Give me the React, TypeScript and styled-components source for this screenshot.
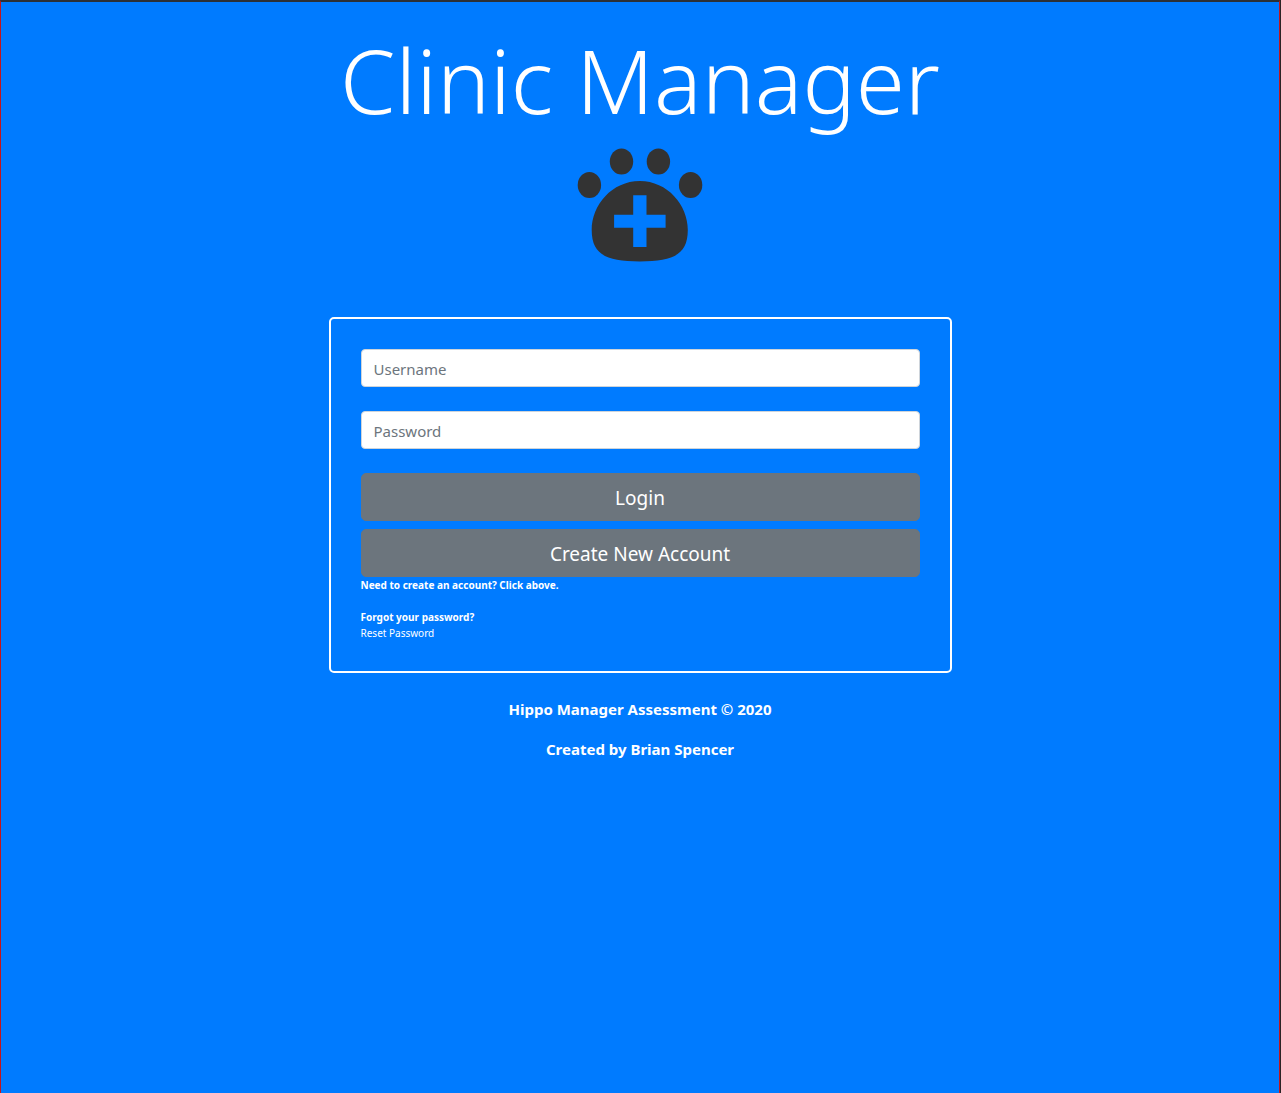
import React from "react";
import styled, { createGlobalStyle } from "styled-components";

const GlobalStyle = createGlobalStyle`
  *, *::before, *::after { box-sizing: border-box; }
  body {
    margin: 0;
    border-right: 1px solid #2b2426;
    background: #007bff;
    color: #fff;
    font-family: "Noto Sans", "Open Sans", sans-serif;
    font-size: 15px;
    line-height: 24px;
  }
`;

const Page = styled.main`
  display: flex;
  flex-direction: column;
  align-items: center;
  min-height: 100vh;
  padding: 20px 0 24px;
  border: 1px solid #c4161c;
  border-top: 2px solid #2b3036;
  border-bottom: 0;
`;

const Title = styled.h1`
  margin: 0 0 3px;
  font-size: 89px;
  font-weight: 300;
  line-height: 116px;
  text-align: center;
`;

const Logo = styled.svg`
  display: block;
  width: 128px;
  height: 128px;
  fill: #333;
`;

const Card = styled.form`
  display: flex;
  flex-direction: column;
  width: calc(50% - 16px);
  margin: 48px 0 24px;
  padding: 30px;
  border: 2px solid #fff;
  border-radius: 5px;
`;

const Field = styled.input`
  width: 100%;
  height: 38px;
  margin: 0 0 24px;
  padding: 8px 12px 6px;
  border: 1px solid #ced4da;
  border-radius: 4px;
  background: #fff;
  color: #495057;
  font: inherit;
  &::placeholder { color: #6c757d; opacity: 1; }
`;

const Actions = styled.div`
  display: grid;
  gap: 8px;
`;

const Button = styled.button`
  height: 48px;
  padding: 9px 16px 7px;
  border: 1px solid #6c757d;
  border-radius: 5px;
  background: #6c757d;
  color: #fff;
  font: inherit;
  font-size: 19px;
  line-height: 30px;
  cursor: pointer;
`;

const Help = styled.p`
  margin: 0 0 16px;
  font-size: 10px;
  line-height: 16px;
  &:last-child { margin-bottom: 0; }
`;

const Strong = styled.strong`
  display: block;
  font-weight: 700;
`;

const ResetLink = styled.a`
  color: #fff;
  text-decoration: none;
`;

const Footer = styled.footer`
  display: grid;
  gap: 16px;
  font-weight: 700;
  text-align: center;
`;

const Credit = styled.p`
  margin: 0;
`;

function PawLogo() {
  return (
    <Logo viewBox="0 0 128 128" role="img" aria-label="Paw with a medical cross">
      <ellipse cx="13.4" cy="44" rx="11.7" ry="13.1" />
      <ellipse cx="45.5" cy="20.5" rx="11.7" ry="13.1" />
      <ellipse cx="82.4" cy="20.5" rx="11.7" ry="13.1" />
      <ellipse cx="114.6" cy="44" rx="11.7" ry="13.1" />
      <path
        fillRule="evenodd"
        d="M63.8 40C36 40 15.7 64 15.7 89C15.7 114 31 120.4 63.8 120.4S111.8 114 111.8 89C111.8 64 91.5 40 63.8 40ZM57.2 54.3H70.5V73.7H89.6V86.7H70.5V106H57.2V86.7H38.1V73.7H57.2Z"
      />
    </Logo>
  );
}

export default function App() {
  return (
    <>
      <GlobalStyle />
      <Page>
        <Title>Clinic Manager</Title>
        <PawLogo />
        <Card onSubmit={(event) => event.preventDefault()}>
          <Field type="text" name="username" placeholder="Username" aria-label="Username" />
          <Field type="password" name="password" placeholder="Password" aria-label="Password" />
          <Actions>
            <Button type="submit">Login</Button>
            <Button type="button">Create New Account</Button>
          </Actions>
          <Help>
            <Strong>Need to create an account? Click above.</Strong>
          </Help>
          <Help>
            <Strong>Forgot your password?</Strong>
            <ResetLink href="#reset">Reset Password</ResetLink>
          </Help>
        </Card>
        <Footer>
          <Credit>Hippo Manager Assessment © 2020</Credit>
          <Credit>Created by Brian Spencer</Credit>
        </Footer>
      </Page>
    </>
  );
}
